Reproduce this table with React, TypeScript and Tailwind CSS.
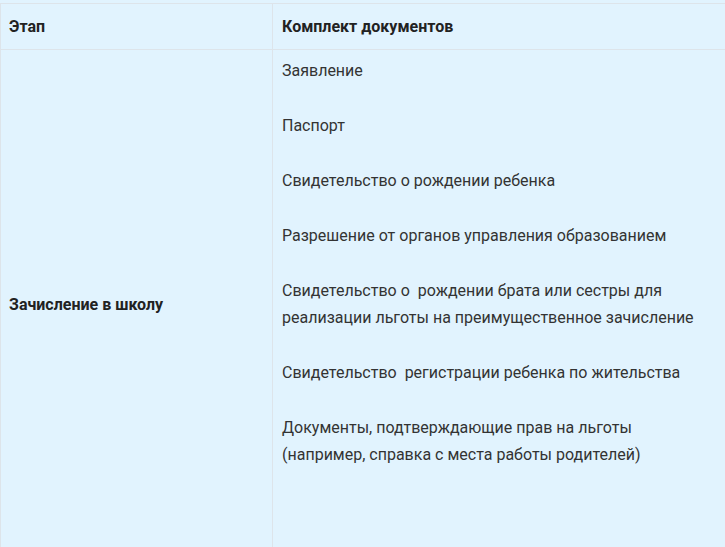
const docs: string[] = [
  'Заявление',
  'Паспорт',
  'Свидетельство о рождении ребенка',
  'Разрешение от органов управления образованием',
  'Свидетельство о\u00a0 рождении брата или сестры для реализации льготы на преимущественное зачисление',
  'Свидетельство\u00a0 регистрации ребенка по жительства',
  'Документы, подтверждающие прав на льготы (например, справка с места работы родителей)',
  '\u00a0',
];

export default function App() {
  return (
    <div className="h-[547px] overflow-hidden bg-[#e1f3fe] pt-[3px] font-['Roboto',sans-serif] text-[#333]">
      <table className="w-[760px] table-fixed border-collapse">
        <colgroup>
          <col className="w-[272px]" />
          <col />
        </colgroup>
        <thead>
          <tr className="h-[46px]">
            <th className="border border-[#dde4ea] px-[8px] text-left text-[16px] font-bold text-[#222]">Этап</th>
            <th className="border border-[#dde4ea] px-[9px] text-left text-[16px] font-bold text-[#222]">
              Комплект документов
            </th>
          </tr>
        </thead>
        <tbody>
          <tr>
            <td className="border border-[#dde4ea] px-[8px] align-middle text-[16px] font-bold text-[#222]">
              Зачисление в школу
            </td>
            <td className="border border-[#dde4ea] px-[9px] pt-[7px] pb-[9px] align-top">
              {docs.map((d, i) => (
                <p key={i} className="mb-[28px] w-[430px] text-[16px] leading-[27px]">
                  {d}
                </p>
              ))}
            </td>
          </tr>
        </tbody>
      </table>
    </div>
  );
}
